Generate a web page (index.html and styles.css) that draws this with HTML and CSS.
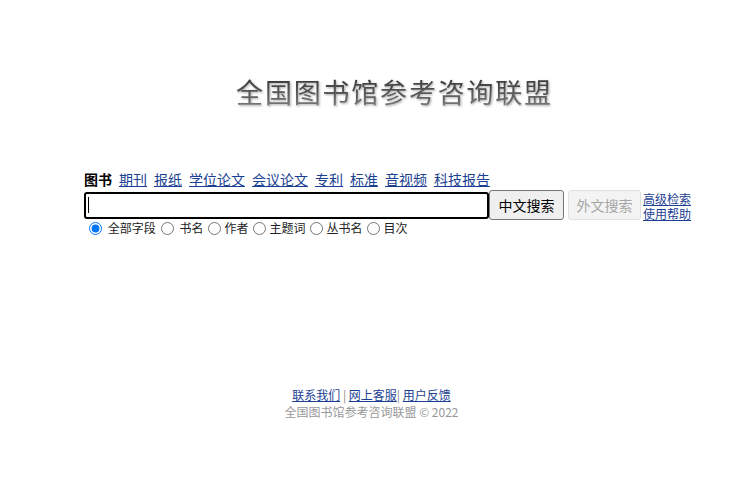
FILE: index.html
```html
<!DOCTYPE html>
<html lang="zh-CN">
<head>
<meta charset="utf-8">
<title>全国图书馆参考咨询联盟</title>
<link rel="stylesheet" href="styles.css">
</head>
<body>
<div class="page">
  <div class="logo"><span class="logo-text">全国图书馆参考咨询联盟</span></div>
  <div class="search">
    <div class="tabs">
      <span class="tab current">图书</span>
      <a class="tab" href="#">期刊</a>
      <a class="tab" href="#">报纸</a>
      <a class="tab" href="#">学位论文</a>
      <a class="tab" href="#">会议论文</a>
      <a class="tab" href="#">专利</a>
      <a class="tab" href="#">标准</a>
      <a class="tab" href="#">音视频</a>
      <a class="tab" href="#">科技报告</a>
    </div>
    <div class="row">
      <div class="input-wrap">
        <input class="query" type="text">
        <span class="caret"></span>
      </div>
      <button class="btn">中文搜索</button>
      <button class="btn btn-disabled" disabled>外文搜索</button>
      <div class="side-links">
        <a href="#">高级检索</a>
        <a href="#">使用帮助</a>
      </div>
    </div>
    <div class="fields">
      <label class="field"><input type="radio" name="f" checked> 全部字段</label>
      <label class="field"><input type="radio" name="f"> 书名</label>
      <label class="field"><input type="radio" name="f">作者</label>
      <label class="field"><input type="radio" name="f">主题词</label>
      <label class="field"><input type="radio" name="f">丛书名</label>
      <label class="field"><input type="radio" name="f">目次</label>
    </div>
  </div>
  <div class="footer">
    <div class="footer-links"><a href="#">联系我们</a> <span class="sep">|</span> <a href="#">网上客服</a><span class="sep">|</span> <a href="#">用户反馈</a></div>
    <div class="copy">全国图书馆参考咨询联盟 © 2022</div>
  </div>
</div>
</body>
</html>
```
FILE: styles.css
```css
html, body {
  margin: 0;
  padding: 0;
  background: #fff;
}
body {
  font-family: "Noto Sans CJK SC", "Liberation Sans", sans-serif;
  color: #000;
}
.page {
  width: 743px;
}
.logo {
  margin-top: 75px;
  height: 34px;
  text-align: center;
  padding-left: 46px;
}
.logo-text {
  font-size: 27px;
  line-height: 34px;
  letter-spacing: 1.8px;
  font-weight: 400;
  background: linear-gradient(#2a2a2a, #666 70%, #888);
  -webkit-background-clip: text;
  background-clip: text;
  color: transparent;
  filter: drop-shadow(1px 1px 1px rgba(0,0,0,0.35));
}
.search {
  width: 575px;
  margin: 60px auto 0;
}
.tabs {
  display: flex;
  gap: 7px;
  font-size: 14px;
  line-height: 20px;
  height: 20px;
  white-space: nowrap;
}
.tab {
  color: #1b3f93;
}
.tab.current {
  color: #000;
  font-weight: 700;
}
a {
  color: #1b3f93;
  text-decoration: underline;
}
.row {
  margin-top: 1px;
  display: flex;
  align-items: center;
  height: 30px;
  width: 620px;
}
.input-wrap {
  position: relative;
  flex: none;
}
.query {
  display: block;
  box-sizing: border-box;
  width: 405px;
  height: 27px;
  border: 2px solid #000;
  border-radius: 3px;
  margin: 0;
  outline: none;
  padding: 0 4px;
}
.caret {
  position: absolute;
  left: 4px;
  top: 5px;
  width: 1px;
  height: 16px;
  background: #000;
}
.btn {
  flex: none;
  box-sizing: border-box;
  height: 30px;
  width: 75px;
  padding: 0;
  margin: 0;
  font-family: "Noto Sans CJK SC", sans-serif;
  font-size: 14px;
  color: #000;
  background: #efefef;
  border: 1px solid #767676;
  border-radius: 3px;
}
.btn-disabled {
  margin-left: 4px;
  width: 73px;
  color: #a6a6a6;
  background: #f3f3f3;
  border-color: #e0e0e0;
}
.side-links {
  flex: none;
  margin-left: 2px;
  display: flex;
  flex-direction: column;
  font-size: 12px;
  line-height: 15px;
  padding-top: 2px;
}
.fields {
  display: flex;
  align-items: center;
  height: 16px;
  margin-top: 0px;
  font-size: 12px;
  line-height: 16px;
  white-space: nowrap;
  color: #222;
}
.field {
  display: inline-flex;
  align-items: center;
  white-space: pre;
}
.field input {
  width: 13px;
  height: 13px;
  margin: 0 3px 0 5px;
}
.footer {
  margin-top: 150px;
  text-align: center;
  font-size: 12px;
  line-height: 17px;
}
.sep {
  color: #888;
}
.copy {
  color: #999;
}
```
